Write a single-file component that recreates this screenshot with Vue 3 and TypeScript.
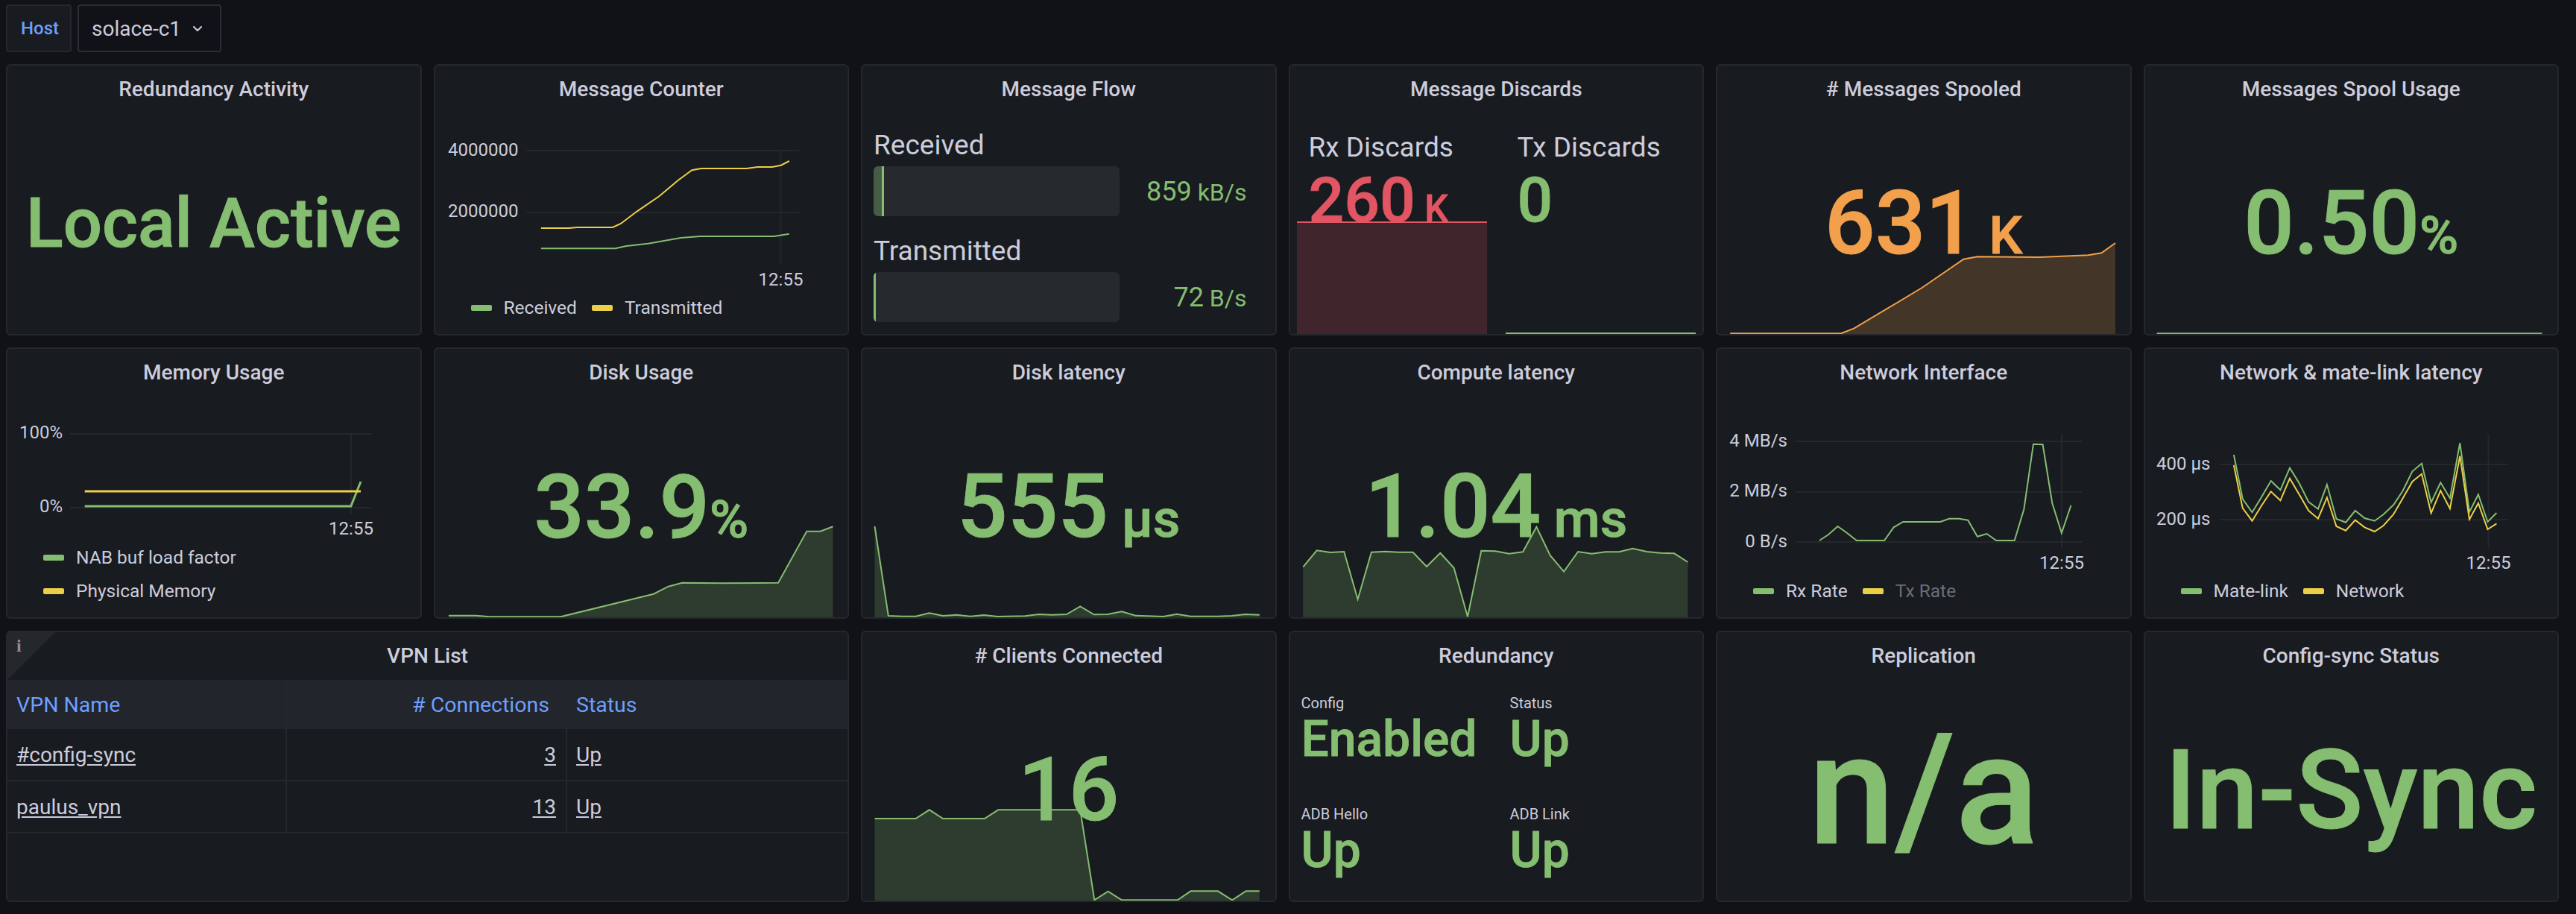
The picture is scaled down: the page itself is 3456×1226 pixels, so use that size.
<script setup lang="ts">
const GREEN = '#85bd71'
const YELLOW = '#eccf49'
const ORANGE = '#f2a04c'
const RED = '#e25563'

const PANEL_W = 557.5
const PANEL_H = 364
const colLeft = [8, 581.5, 1155, 1728.5, 2302, 2875.5]
const rowTop = [86, 466, 846]

// traced points are in screenshot-crop units, x squeezed by sx and y by 3
const trace = (raw: number[], cropX: number, cropY: number, sx: number) => {
  const out: [number, number][] = []
  for (let i = 0; i < raw.length; i += 2) {
    out.push([cropX + raw[i] / sx, cropY + raw[i + 1] / 3])
  }
  return out
}
const toStr = (p: [number, number][]) => p.map((q) => `${q[0].toFixed(1)},${q[1].toFixed(1)}`).join(' ')

interface Stat {
  title: string
  col: number
  row: number
  value: string
  unit?: string
  size: number
  unitSize?: number
  baseline: number
  color: string
  spark?: [number, number][]
}

const S1 = 1.3635
const S2 = 1.3448

const spooled = trace([42, 1132, 242, 1132, 265, 1112, 388, 948, 463, 833, 488, 823, 600, 825, 688, 817, 712, 808, 737, 768], 2290, 70, S2)
const spoolUsage = trace([811, 1132, 1506, 1132], 2290, 70, S2)
const diskUsage = trace([820, 1097, 870, 1097, 895, 1102, 1025, 1102, 1195, 1010, 1222, 980, 1247, 965, 1320, 967, 1423, 965, 1475, 758, 1500, 758, 1523, 739], 0, 460, S1)
const diskLatency = trace([32, 738, 57, 1098, 82, 1100, 107, 1100, 132, 1087, 157, 1098, 182, 1094, 207, 1100, 232, 1095, 257, 1101, 307, 1099, 332, 1092, 357, 1094, 383, 1092, 408, 1060, 433, 1093, 458, 1092, 484, 1081, 509, 1097, 560, 1101, 585, 1091, 610, 1100, 660, 1100, 685, 1098, 710, 1092, 736, 1094], 1150, 460, S1)
const computeLatency = trace([815, 902, 840, 835, 865, 843, 890, 840, 915, 1032, 940, 842, 965, 839, 990, 842, 1016, 842, 1041, 900, 1066, 845, 1091, 905, 1116, 1102, 1141, 836, 1167, 838, 1192, 848, 1217, 841, 1242, 740, 1267, 855, 1292, 920, 1318, 840, 1343, 848, 1368, 841, 1393, 841, 1418, 827, 1444, 840, 1469, 845, 1494, 847, 1519, 882], 1150, 460, S1)
const clients = trace([32, 774, 107, 774, 132, 739, 157, 774, 233, 774, 258, 739, 408, 739, 434, 1102, 459, 1067, 484, 1102, 586, 1102, 610, 1066, 660, 1066, 686, 1102, 711, 1066, 736, 1066], 1150, 840, S1)

const stat = (s: Stat) => ({ kind: 'stat' as const, ...s })

interface Chart {
  title: string
  col: number
  row: number
  labelX: number
  grid: { y: number; x1: number; x2: number; label: string; labelY: number }[]
  tick: { x: number; y1: number; y2: number; labelY: number }
  series: { color: string; points: [number, number][]; width?: number }[]
  legend: { label: string; color: string; off?: boolean }[]
  vertical?: boolean
}

const chart = (c: Chart) => ({ kind: 'chart' as const, ...c })

const panels = [
  stat({ title: 'Redundancy Activity', col: 0, row: 0, value: 'Local Active', size: 92, baseline: 245, color: GREEN }),
  chart({
    title: 'Message Counter', col: 1, row: 0, labelX: 695,
    grid: [
      { y: 202, x1: 706, x2: 1072, label: '4000000', labelY: 200.5 },
      { y: 285, x1: 706, x2: 1072, label: '2000000', labelY: 283 },
    ],
    tick: { x: 1047, y1: 202, y2: 354, labelY: 375 },
    series: [
      { color: GREEN, points: trace([989, 1000, 1125, 1000, 1145, 990, 1185, 980, 1245, 957, 1280, 951, 1415, 951, 1443, 941], 0, 0, S1) },
      { color: YELLOW, points: trace([989, 918, 1040, 918, 1055, 915, 1120, 915, 1135, 900, 1165, 850, 1205, 790, 1240, 725, 1265, 685, 1282, 678, 1365, 678, 1385, 672, 1412, 672, 1428, 665, 1443, 648], 0, 0, S1) },
    ],
    legend: [{ label: 'Received', color: GREEN }, { label: 'Transmitted', color: YELLOW }],
  }),
  { kind: 'flow' as const, title: 'Message Flow', col: 2, row: 0 },
  { kind: 'discards' as const, title: 'Message Discards', col: 3, row: 0 },
  stat({ title: '# Messages Spooled', col: 4, row: 0, value: '631', unit: ' K', size: 119, unitSize: 71, baseline: 254, color: ORANGE, spark: spooled }),
  stat({ title: 'Messages Spool Usage', col: 5, row: 0, value: '0.50', unit: '%', size: 119, unitSize: 71, baseline: 254, color: GREEN, spark: spoolUsage }),
  chart({
    title: 'Memory Usage', col: 0, row: 1, labelX: 84, vertical: true,
    grid: [
      { y: 582, x1: 94, x2: 499, label: '100%', labelY: 580 },
      { y: 681, x1: 94, x2: 499, label: '0%', labelY: 679 },
    ],
    tick: { x: 471, y1: 582, y2: 690, labelY: 709 },
    series: [
      { color: GREEN, width: 3, points: trace([155, 657, 642, 657, 660, 558], 0, 460, S1) },
      { color: YELLOW, width: 3, points: trace([155, 597, 660, 597], 0, 460, S1) },
    ],
    legend: [{ label: 'NAB buf load factor', color: GREEN }, { label: 'Physical Memory', color: YELLOW }],
  }),
  stat({ title: 'Disk Usage', col: 1, row: 1, value: '33.9', unit: '%', size: 119, unitSize: 71, baseline: 255, color: GREEN, spark: diskUsage }),
  stat({ title: 'Disk latency', col: 2, row: 1, value: '555', unit: ' µs', size: 119, unitSize: 71, baseline: 254, color: GREEN, spark: diskLatency }),
  stat({ title: 'Compute latency', col: 3, row: 1, value: '1.04', unit: ' ms', size: 119, unitSize: 71, baseline: 254, color: GREEN, spark: computeLatency }),
  chart({
    title: 'Network Interface', col: 4, row: 1, labelX: 2398,
    grid: [
      { y: 592, x1: 2409, x2: 2793, label: '4 MB/s', labelY: 591 },
      { y: 660, x1: 2409, x2: 2793, label: '2 MB/s', labelY: 658 },
      { y: 727, x1: 2409, x2: 2793, label: '0 B/s', labelY: 726 },
    ],
    tick: { x: 2766, y1: 582, y2: 735, labelY: 755 },
    series: [
      { color: GREEN, points: trace([203, 795, 219, 772, 236, 738, 253, 765, 270, 795, 320, 795, 337, 742, 354, 720, 421, 720, 437, 707, 455, 707, 471, 713, 488, 779, 505, 768, 522, 795, 555, 795, 572, 670, 589, 407, 606, 409, 623, 645, 640, 765, 657, 653], 2290, 460, S2) },
    ],
    legend: [{ label: 'Rx Rate', color: GREEN }, { label: 'Tx Rate', color: YELLOW, off: true }],
  }),
  chart({
    title: 'Network & mate-link latency', col: 5, row: 1, labelX: 2965,
    grid: [
      { y: 623, x1: 2978, x2: 3364, label: '400 µs', labelY: 622 },
      { y: 697, x1: 2978, x2: 3364, label: '200 µs', labelY: 696 },
    ],
    tick: { x: 3338, y1: 582, y2: 735, labelY: 755 },
    series: [
      { color: GREEN, points: trace([950, 450, 966, 628, 983, 682, 1000, 620, 1017, 555, 1034, 592, 1051, 503, 1068, 565, 1085, 640, 1102, 668, 1118, 570, 1135, 708, 1152, 722, 1169, 675, 1186, 705, 1204, 716, 1220, 690, 1238, 652, 1255, 595, 1272, 517, 1289, 485, 1306, 642, 1323, 562, 1340, 625, 1358, 403, 1375, 680, 1391, 610, 1408, 720, 1424, 684], 2290, 460, S2) },
      { color: YELLOW, points: trace([950, 492, 966, 665, 983, 716, 1000, 655, 1017, 598, 1034, 634, 1051, 545, 1068, 610, 1085, 675, 1102, 707, 1118, 622, 1135, 738, 1152, 755, 1169, 713, 1186, 742, 1204, 759, 1220, 735, 1238, 690, 1255, 625, 1272, 558, 1289, 527, 1306, 685, 1323, 594, 1340, 667, 1358, 455, 1375, 710, 1391, 645, 1408, 750, 1424, 727], 2290, 460, S2) },
    ],
    legend: [{ label: 'Mate-link', color: GREEN }, { label: 'Network', color: YELLOW }],
  }),
  { kind: 'table' as const, title: 'VPN List', col: 0, row: 2 },
  stat({ title: '# Clients Connected', col: 2, row: 2, value: '16', size: 119, baseline: 254, color: GREEN, spark: clients }),
  { kind: 'redundancy' as const, title: 'Redundancy', col: 3, row: 2 },
  stat({ title: 'Replication', col: 4, row: 2, value: 'n/a', size: 208, baseline: 285, color: GREEN }),
  stat({ title: 'Config-sync Status', col: 5, row: 2, value: 'In-Sync', size: 149, baseline: 265, color: GREEN }),
]

const box = (col: number, row: number) => `${colLeft[col]} ${rowTop[row]} ${PANEL_W} ${PANEL_H}`

const area = (p: [number, number][], row: number) => {
  const bottom = rowTop[row] + PANEL_H - 2
  return `${p[0][0].toFixed(1)},${bottom} ${toStr(p)} ${p[p.length - 1][0].toFixed(1)},${bottom}`
}

// line-height 1 puts the Roboto baseline .841em under the line top, body starts 66px into the panel
const valueTop = (s: Stat) => `${(s.baseline - 0.841 * s.size - 66).toFixed(1)}px`

const flows = [
  { label: 'Received', value: '859', unit: ' kB/s', fill: 14 },
  { label: 'Transmitted', value: '72', unit: ' B/s', fill: 3 },
]

const redundancy = [
  { label: 'Config', value: 'Enabled' },
  { label: 'Status', value: 'Up' },
  { label: 'ADB Hello', value: 'Up' },
  { label: 'ADB Link', value: 'Up' },
]

const vpns = [
  { name: '#config-sync', connections: 3, status: 'Up' },
  { name: 'paulus_vpn', connections: 13, status: 'Up' },
]
</script>

<template>
  <div class="page">
    <div class="toolbar">
      <span class="var-label">Host</span>
      <button class="var-select">
        solace-c1
        <svg width="12" height="7" viewBox="0 0 12 7" fill="none">
          <path d="M1 1l5 5 5-5" stroke="#ccccdc" stroke-width="2" stroke-linecap="round" stroke-linejoin="round" />
        </svg>
      </button>
    </div>

    <div class="dashboard">
      <section
        v-for="p in panels"
        :key="p.title"
        class="panel"
        :class="{ wide: p.kind === 'table' }"
      >
        <h2 class="title">{{ p.title }}</h2>

        <template v-if="p.kind === 'stat'">
          <div class="stat" :style="{ paddingTop: valueTop(p), color: p.color, fontSize: p.size + 'px' }">
            {{ p.value }}<span v-if="p.unit" class="unit" :style="{ fontSize: p.unitSize + 'px' }">{{ p.unit }}</span>
          </div>
          <svg v-if="p.spark" class="canvas" :viewBox="box(p.col, p.row)">
            <polygon :points="area(p.spark, p.row)" :fill="p.color" fill-opacity="0.2" />
            <polyline :points="toStr(p.spark)" fill="none" :stroke="p.color" stroke-width="2" />
          </svg>
        </template>

        <template v-else-if="p.kind === 'chart'">
          <svg class="canvas" :viewBox="box(p.col, p.row)">
            <line
              v-for="g in p.grid"
              :key="g.y"
              class="gridline"
              :x1="g.x1"
              :x2="g.x2"
              :y1="g.y"
              :y2="g.y"
            />
            <line class="gridline" :x1="p.tick.x" :x2="p.tick.x" :y1="p.tick.y1" :y2="p.tick.y2" />
            <text
              v-for="g in p.grid"
              :key="g.label"
              class="axis"
              text-anchor="end"
              :x="p.labelX"
              :y="g.labelY"
            >{{ g.label }}</text>
            <text class="axis" text-anchor="middle" :x="p.tick.x" :y="p.tick.labelY">12:55</text>
            <polyline
              v-for="s in p.series"
              :key="s.color"
              :points="toStr(s.points)"
              fill="none"
              :stroke="s.color"
              :stroke-width="s.width ?? 2"
            />
          </svg>
          <ul class="legend" :class="{ vertical: p.vertical }">
            <li v-for="l in p.legend" :key="l.label" :class="{ off: l.off }">
              <i :style="{ background: l.color }"></i>{{ l.label }}
            </li>
          </ul>
        </template>

        <div v-else-if="p.kind === 'flow'" class="flow">
          <div v-for="f in flows" :key="f.label" class="flow-item">
            <div class="flow-label">{{ f.label }}</div>
            <div class="flow-row">
              <div class="bar">
                <div class="bar-fill" :style="{ width: f.fill + 'px' }"></div>
              </div>
              <div class="flow-value">{{ f.value }}<span class="flow-unit">{{ f.unit }}</span></div>
            </div>
          </div>
        </div>

        <div v-else-if="p.kind === 'discards'" class="discards">
          <div class="discard">
            <div class="discard-label">Rx Discards</div>
            <div class="discard-value red">260<span class="discard-unit"> K</span></div>
            <div class="discard-area red-area"></div>
          </div>
          <div class="discard">
            <div class="discard-label">Tx Discards</div>
            <div class="discard-value">0</div>
            <div class="discard-area green-area"></div>
          </div>
        </div>

        <template v-else-if="p.kind === 'table'">
          <span class="corner"><span class="corner-i">i</span></span>
          <table class="vpn">
            <colgroup>
              <col class="c1" />
              <col class="c2" />
              <col />
            </colgroup>
            <thead>
              <tr>
                <th>VPN Name</th>
                <th class="num head-num"># Connections</th>
                <th>Status</th>
              </tr>
            </thead>
            <tbody>
              <tr v-for="v in vpns" :key="v.name">
                <td><a>{{ v.name }}</a></td>
                <td class="num"><a>{{ v.connections }}</a></td>
                <td><a>{{ v.status }}</a></td>
              </tr>
            </tbody>
          </table>
        </template>

        <div v-else class="redundancy">
          <div v-for="r in redundancy" :key="r.label" class="red-cell">
            <div class="red-label">{{ r.label }}</div>
            <div class="red-value">{{ r.value }}</div>
          </div>
        </div>
      </section>
    </div>
  </div>
</template>

<style scoped>
.page {
  font-family: Roboto, "Liberation Sans", sans-serif;
  color: #ccccdc;
  width: 3456px;
  height: 1226px;
  overflow: hidden;
}

.toolbar {
  display: flex;
  gap: 8px;
  padding: 6px 0 0 8px;
  height: 64px;
}

.var-label {
  display: flex;
  align-items: center;
  padding: 0 18px;
  width: 88px;
  box-sizing: border-box;
  font-size: 24px;
  font-weight: 500;
  color: #6e9fff;
  background: #181b1f;
  border: 2px solid #24272c;
  border-radius: 4px;
}

.var-select {
  display: flex;
  align-items: center;
  gap: 16px;
  padding: 0 24px 0 17px;
  font: inherit;
  font-size: 28px;
  color: #ccccdc;
  background: #111217;
  border: 2px solid #2b2e34;
  border-radius: 4px;
}

.dashboard {
  display: grid;
  grid-template-columns: repeat(6, 1fr);
  grid-auto-rows: 364px;
  gap: 16px;
  width: 3425px;
  margin: 16px 0 0 8px;
}

.panel {
  position: relative;
  display: flex;
  flex-direction: column;
  min-width: 0;
  box-sizing: border-box;
  background: #181b1f;
  border: 2px solid #24272c;
  border-radius: 6px;
  overflow: hidden;
}

.wide {
  grid-column: span 2;
}

.title {
  margin: 0;
  height: 64px;
  line-height: 64px;
  font-size: 28px;
  font-weight: 500;
  text-align: center;
  color: #ccccdc;
}

.canvas {
  position: absolute;
  top: -2px;
  left: -2px;
  width: 557.5px;
  height: 364px;
  overflow: visible;
  pointer-events: none;
}

.gridline {
  stroke: #24272c;
  stroke-width: 2;
}

.axis {
  font-size: 24px;
  fill: #ccccdc;
  dominant-baseline: central;
}

.stat {
  line-height: 1;
  font-weight: 500;
  text-align: center;
  white-space: pre;
  -webkit-text-stroke: 1px currentColor;
}

.unit {
  white-space: pre;
}

.legend {
  display: flex;
  gap: 20px;
  list-style: none;
  margin: auto 0 0;
  padding: 0 0 19px 48px;
  font-size: 24.5px;
  line-height: 32px;
}

.legend.vertical {
  flex-direction: column;
  gap: 13px;
}

.legend li {
  display: flex;
  align-items: center;
  gap: 16px;
}

.legend li.off {
  color: #6c6d75;
}

.legend i {
  width: 28px;
  height: 8px;
  border-radius: 2px;
}

.flow {
  display: flex;
  flex-direction: column;
  gap: 25px;
  padding: 21px 38px 0 15px;
}

.flow-label {
  font-size: 37px;
  line-height: 44px;
  margin-bottom: 6px;
}

.flow-row {
  display: flex;
  align-items: center;
  justify-content: space-between;
}

.bar {
  display: flex;
  width: 330px;
  height: 67px;
  background: #26292e;
  border-radius: 6px;
  overflow: hidden;
}

.bar-fill {
  box-sizing: border-box;
  background: rgba(133, 189, 113, 0.35);
  border-right: 3px solid #85bd71;
}

.flow-value {
  font-size: 36px;
  font-weight: 400;
  color: #85bd71;
  white-space: pre;
}

.flow-unit {
  font-size: 32px;
}

.discards {
  display: flex;
  flex: 1;
  gap: 25px;
  padding: 0 10px 0 9px;
}

.discard {
  position: relative;
  flex: 0 0 255px;
  padding: 24px 0 0 16px;
  box-sizing: border-box;
}

.discard-label {
  font-size: 37px;
  line-height: 44px;
}

.discard-value {
  font-size: 84px;
  line-height: 1;
  font-weight: 500;
  color: #85bd71;
  margin-top: 7px;
  white-space: pre;
  -webkit-text-stroke: 0.8px currentColor;
}

.discard-value.red {
  color: #e25563;
}

.discard-unit {
  font-size: 50px;
}

.discard-area {
  position: absolute;
  left: 0;
  right: 0;
  bottom: 0;
}

.red-area {
  top: 145px;
  background: rgba(226, 85, 99, 0.2);
  border-top: 2px solid #e25563;
}

.green-area {
  height: 2px;
  background: #85bd71;
}

.corner {
  position: absolute;
  top: 0;
  left: 0;
  width: 64px;
  height: 64px;
  background: #24272c;
  clip-path: polygon(0 0, 100% 0, 0 100%);
}

.corner-i {
  position: absolute;
  top: 4px;
  left: 12px;
  font-size: 24px;
  line-height: 28px;
  font-weight: 700;
  color: #8e8e96;
  font-family: "Liberation Serif", serif;
}

.vpn {
  width: 100%;
  table-layout: fixed;
  border-collapse: collapse;
  font-size: 28px;
}

.c1 {
  width: 374px;
}

.c2 {
  width: 376px;
}

.vpn th,
.vpn td {
  padding: 0 13px 0 12px;
  text-align: left;
  font-weight: 400;
  border-right: 2px solid #24272c;
}

.vpn th:last-child,
.vpn td:last-child {
  border-right: 0;
}

.vpn th {
  height: 66px;
  font-size: 28.5px;
  color: #6e9fff;
  background: #22252b;
}

.vpn td {
  height: 68px;
  border-bottom: 2px solid #24272c;
}

.vpn .num {
  text-align: right;
}

.vpn .head-num {
  padding-right: 22px;
}

.vpn a {
  text-decoration: underline;
  text-underline-offset: 3px;
}

.redundancy {
  display: grid;
  grid-template-columns: 280px 1fr;
  row-gap: 55px;
  padding: 19px 0 0 15px;
}

.red-label {
  font-size: 20px;
  line-height: 24px;
  margin-bottom: 4px;
}

.red-value {
  font-size: 66px;
  line-height: 1;
  font-weight: 500;
  color: #85bd71;
  -webkit-text-stroke: 0.8px currentColor;
}
</style>

<style>
body {
  background: #111217;
}
</style>
